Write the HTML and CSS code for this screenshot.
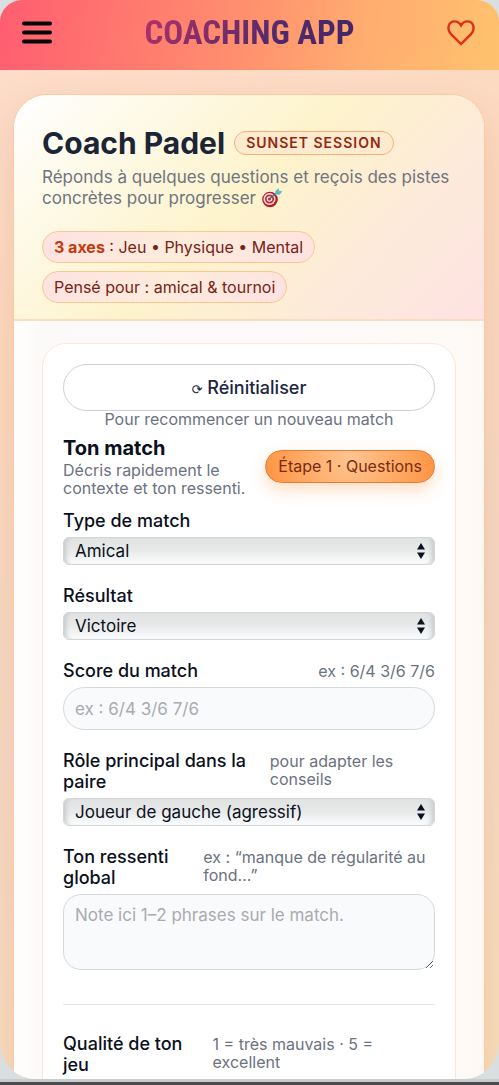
FILE: index.html
```
<!DOCTYPE html>
<html lang="fr">
<head>
<meta charset="utf-8">
<meta name="viewport" content="width=device-width, initial-scale=1">
<title>Coaching App</title>
<link rel="stylesheet" href="styles.css">
</head>
<body>
<div class="device">
  <header class="topbar">
    <button class="icon-button" type="button" aria-label="Menu">
      <svg width="30" height="24" viewBox="0 0 30 24" stroke="#050505" stroke-width="4" stroke-linecap="round"><path d="M2 2.500h26M2 11.500h26M2 20.500h26"/></svg>
    </button>
    <div class="brand">COACHING APP</div>
    <button class="icon-button" type="button" aria-label="Favoris">
      <svg width="28" height="26" viewBox="0 0 28 26" fill="none" stroke="#dc3018" stroke-width="2.400" stroke-linejoin="miter"><path d="M14 24 L4.200 14.300 C-.6 9.400 1.200 1.400 7.600 1.400 C10.600 1.400 12.600 3 14 5.400 C15.400 3 17.400 1.400 20.400 1.400 C26.800 1.400 28.600 9.400 23.800 14.300 Z"/></svg>
    </button>
  </header>
  <main class="content">
    <article class="card">
      <section class="hero">
        <div class="title-row">
          <h1>Coach Padel</h1>
          <span class="session">SUNSET SESSION</span>
        </div>
        <p class="intro">Réponds à quelques questions et reçois des pistes concrètes pour progresser
          <svg class="target" role="img" aria-label="cible" width="22" height="20" viewBox="0 0 22 20"><circle cx="9" cy="11.500" r="7.800" fill="#b51f2c"/><circle cx="8.500" cy="11" r="6" fill="#f4e5e1"/><circle cx="8.500" cy="11" r="4.500" fill="#c72635"/><circle cx="8.500" cy="11" r="2.800" fill="#f4e5e1"/><circle cx="8.500" cy="11" r="1.500" fill="#c72635"/><path d="M8.500 11 15 5" stroke="#37717c" stroke-width="1.300"/><path d="M14 6.500 14.500 3 17.500 .3 18.300 3 21.500 3.300 18.500 6.800Z" fill="#63b9c0"/></svg>
        </p>
        <ul class="pills">
          <li><strong>3 axes</strong> : Jeu • Physique • Mental</li>
          <li>Pensé pour : amical &amp; tournoi</li>
        </ul>
      </section>
      <div class="card-body">
        <form class="panel">
          <button class="reset" type="reset"><span class="reset-icon">⟳</span> Réinitialiser</button>
          <p class="reset-note">Pour recommencer un nouveau match</p>
          <div class="step-row">
            <div>
              <h2>Ton match</h2>
              <p class="hint">Décris rapidement le contexte et ton ressenti.</p>
            </div>
            <span class="step">Étape 1 · Questions</span>
          </div>
          <div class="field">
            <div class="field-head"><label for="type">Type de match</label></div>
            <div class="select-box">
              <select id="type"><option>Amical</option><option>Tournoi</option></select>
              <svg class="arrows" width="8" height="16" viewBox="0 0 8 16" fill="#0b1020"><path d="M0 6.500 4 0 8 6.500ZM0 9.500H8L4 16Z"/></svg>
            </div>
          </div>
          <div class="field">
            <div class="field-head"><label for="result">Résultat</label></div>
            <div class="select-box">
              <select id="result"><option>Victoire</option><option>Défaite</option></select>
              <svg class="arrows" width="8" height="16" viewBox="0 0 8 16" fill="#0b1020"><path d="M0 6.500 4 0 8 6.500ZM0 9.500H8L4 16Z"/></svg>
            </div>
          </div>
          <div class="field">
            <div class="field-head"><label for="score">Score du match</label><span class="hint">ex : 6/4 3/6 7/6</span></div>
            <input class="text" id="score" type="text" placeholder="ex : 6/4 3/6 7/6">
          </div>
          <div class="field">
            <div class="field-head"><label for="role">Rôle principal dans la paire</label><span class="hint">pour adapter les conseils</span></div>
            <div class="select-box">
              <select id="role"><option>Joueur de gauche (agressif)</option><option>Joueur de droite</option></select>
              <svg class="arrows" width="8" height="16" viewBox="0 0 8 16" fill="#0b1020"><path d="M0 6.500 4 0 8 6.500ZM0 9.500H8L4 16Z"/></svg>
            </div>
          </div>
          <div class="field">
            <div class="field-head"><label for="feeling">Ton ressenti global</label><span class="hint">ex : “manque de régularité au fond...”</span></div>
            <textarea class="text note" id="feeling" placeholder="Note ici 1–2 phrases sur le match."></textarea>
          </div>
          <hr class="divider">
          <div class="field">
            <div class="field-head"><label for="quality">Qualité de ton jeu</label><span class="hint">1 = très mauvais · 5 = excellent</span></div>
            <input id="quality" class="range" type="range" min="1" max="5">
          </div>
        </form>
      </div>
    </article>
  </main>
</div>
<div class="bottom-edge"></div>
</body>
</html>
```
FILE: styles.css
```
* { box-sizing: border-box; }
body {
  margin: 0;
  height: 100vh;
  display: flex;
  flex-direction: column;
  overflow: hidden;
  background: #d9dfe1;
  color: #0b1020;
  font-family: Inter, "Liberation Sans", sans-serif;
  font-size: 18px;
  line-height: 21px;
}
h1, h2, p, ul { margin: 0; padding: 0; }
.device {
  flex: 1;
  min-height: 0;
  display: flex;
  flex-direction: column;
  overflow: hidden;
  border-radius: 22px 22px 36px 36px;
  background: linear-gradient(160deg, #fddccb 0%, #fcd9bd 30%, #f7d8c4 60%, #f8deb9 100%);
}
.topbar {
  flex: none;
  height: 70px;
  padding: 0 24px 5px 22px;
  display: flex;
  align-items: center;
  justify-content: space-between;
  background: linear-gradient(100deg, #ff5d70 0%, #ff8f6e 48%, #ffac70 72%, #ffc26e 100%);
}
.icon-button { padding: 0; border: 0; background: none; display: flex; }
.brand {
  font-family: "Roboto Condensed", "Liberation Sans Narrow", "Liberation Sans", sans-serif;
  font-weight: 700;
  font-size: 33px;
  line-height: 44px;
  background: linear-gradient(135deg, #b83268 0%, #532a6c 60%, #3d2467 100%);
  background-clip: text;
  color: transparent;
}
.content { flex: 1; min-height: 0; padding: 24px 14px 0 13px; overflow-y: auto; scrollbar-width: none; }
.card {
  border: 1px solid #fcc9a0;
  border-radius: 34px;
  background: #fffdfb;
  box-shadow: 0 16px 36px rgba(160, 80, 50, 0.14);
  overflow: hidden;
}
.hero {
  padding: 30px 28px 16px;
  border-bottom: 2px solid #fbdcc0;
  background: linear-gradient(135deg, #ffffff 0%, #fdf3cb 48%, #fdeadb 76%, #fee2e2 100%);
}
.title-row { display: flex; align-items: center; gap: 9px; }
h1 { font-size: 30px; line-height: 36px; font-weight: 700; color: #1b2536; white-space: nowrap; }
.session {
  padding: 0 11px;
  border: 1px solid #f9ae76;
  border-radius: 12px;
  background: #fdebd0;
  color: #94280f;
  font-size: 14px;
  line-height: 22px;
  font-weight: 600;
  letter-spacing: 1px;
  white-space: nowrap;
}
.intro { margin-top: 6px; color: #6f7480; font-size: 17px; line-height: 21px; }
.target { vertical-align: -4px; }
.pills { margin-top: 22px; display: flex; flex-wrap: wrap; gap: 8px; list-style: none; }
.pills li {
  padding: 0 11px;
  border: 1px solid #fbc793;
  border-radius: 16px;
  background: linear-gradient(135deg, #fee2e2, #feecdc 50%, #fee2e2);
  color: #762315;
  font-size: 16px;
  line-height: 30px;
}
.pills strong { color: #c53a0d; font-weight: 700; }
.card-body { padding: 22px 28px 28px; background: linear-gradient(90deg, #fffefc, #fcfaf9 6%, #fdfaf8 94%, #fff8f2); }
.panel {
  padding: 20px 20px 28px;
  border: 1px solid #fde6d8;
  border-radius: 24px;
  background: #fff;
}
.reset {
  width: 100%;
  height: 47px;
  border: 1px solid #cdd0d6;
  border-radius: 24px;
  background: #fff;
  color: #1b2540;
  font: 500 18px/21px Inter, sans-serif;
}
.reset-icon { font: 13px/13px "DejaVu Sans", sans-serif; }
.reset-note { color: #6b7280; font-size: 16px; line-height: 16px; text-align: center; }
.step-row { margin: 9px 0 13px; display: flex; align-items: center; justify-content: space-between; gap: 12px; }
h2 { font-size: 20px; line-height: 25px; font-weight: 700; }
.hint { color: #6b7280; font-size: 16px; line-height: 18px; }
.step {
  flex: none;
  padding: 0 12px;
  border: 1px solid #ea7a35;
  border-radius: 17px;
  background: radial-gradient(circle at 50% 20%, #ffc590, #fd9443);
  box-shadow: 0 7px 16px rgba(251, 146, 60, 0.3);
  color: #7a2c12;
  font-size: 16px;
  line-height: 31px;
}
.field { margin-bottom: 20px; }
.field-head { margin-bottom: 6px; display: flex; justify-content: space-between; align-items: baseline; gap: 6px; }
.field-head label { font-weight: 500; }
.select-box { display: grid; align-items: center; }
.select-box select, .arrows { grid-area: 1 / 1; }
.arrows { justify-self: end; margin-right: 10px; pointer-events: none; }
select {
  appearance: none;
  width: 100%;
  height: 28px;
  padding: 0 28px 0 11px;
  border: 1px solid #d3d5d6;
  border-radius: 6px;
  background: linear-gradient(#e1e3e3, #e7e9e9 45%, #fafcfd);
  box-shadow: inset 6px 0 5px -4px #c5c8c9, inset -6px 0 5px -4px #c5c8c9;
  color: #0b1020;
  font: 17px/21px Inter, sans-serif;
}
.text {
  display: block;
  width: 100%;
  height: 43px;
  padding: 0 11px;
  border: 1px solid #d5d8dd;
  border-radius: 22px;
  background: #f9fafc;
  color: #0b1020;
  font: 17px/21px Inter, sans-serif;
}
.text::placeholder { color: #a9abae; }
.note { height: 76px; padding: 10px 11px; border-radius: 18px; resize: vertical; }
.divider { margin: 34px 0 28px; border: 0; border-top: 1px solid #e3e5e9; }
.range { width: 100%; }
.bottom-edge { flex: none; height: 6px; border-top: 3px solid #c9cccd; background: #4b4b4d; }
```
